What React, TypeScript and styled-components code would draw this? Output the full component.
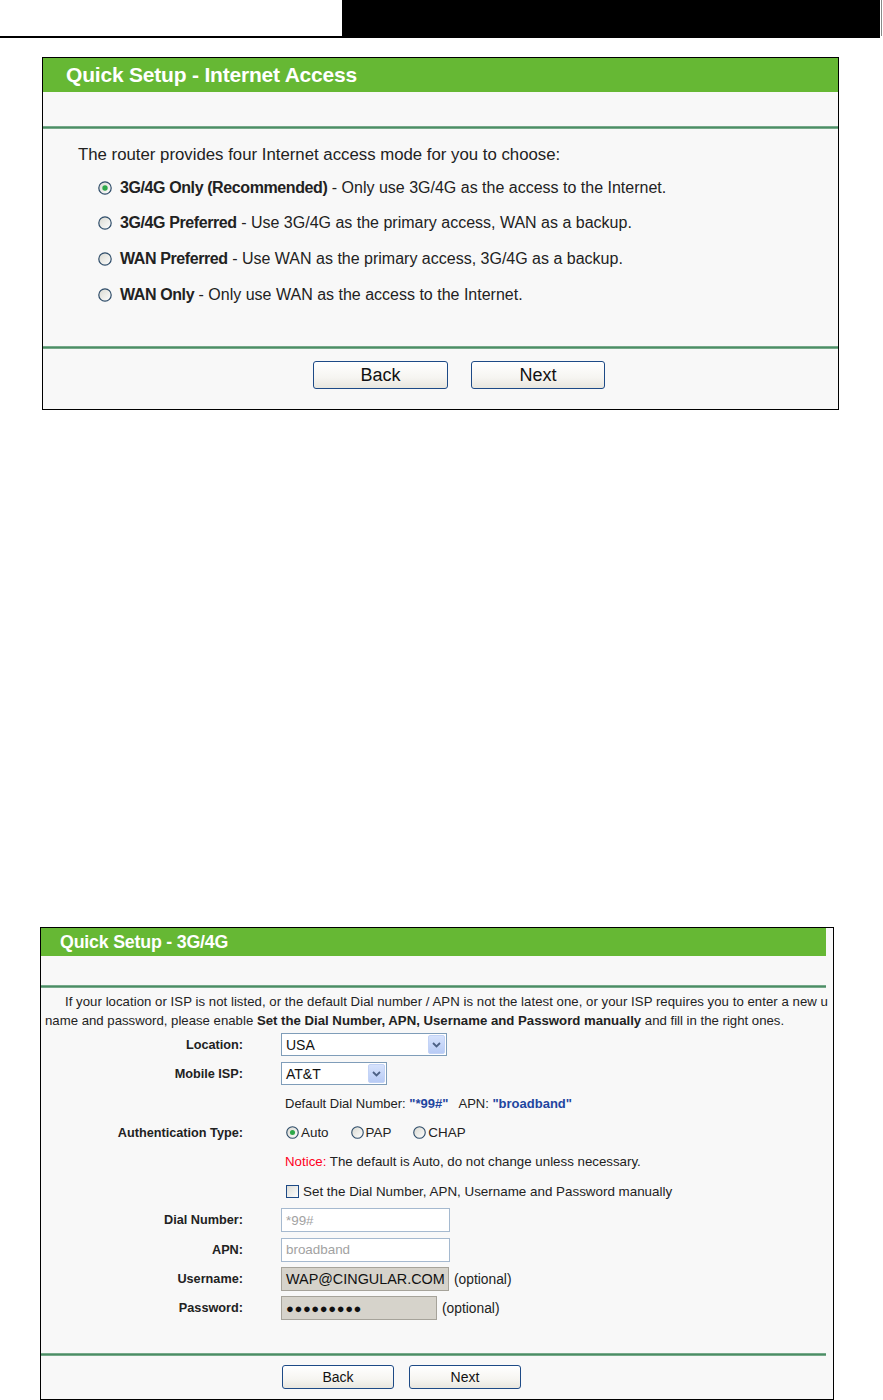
import styled, { createGlobalStyle } from "styled-components";

const GlobalStyle = createGlobalStyle`
  html, body {
    margin: 0;
    padding: 0;
    background: #fff;
  }
  body {
    font-family: "Liberation Sans", Arial, sans-serif;
    color: #222;
  }
`;

const Header = styled.div`
  display: flex;
  height: 38px;
`;

const HeaderLeft = styled.div`
  width: 342px;
  box-sizing: border-box;
  border-bottom: 2px solid #000;
`;

const HeaderBar = styled.div`
  width: 538px;
  background: #000;
`;

const HeaderEdge = styled.div`
  width: 1px;
  height: 36px;
  margin-left: 1px;
  background: #8a8a8a;
`;

const Panel = styled.section<{ $left: number; $top: number; $width: number; $height: number; $padRight?: number }>`
  box-sizing: border-box;
  margin: ${(p) => p.$top}px 0 0 ${(p) => p.$left}px;
  width: ${(p) => p.$width}px;
  height: ${(p) => p.$height}px;
  border: 1px solid #000;
  background: #f8f8f8;
  padding-right: ${(p) => p.$padRight ?? 0}px;
  display: flex;
  flex-direction: column;
  overflow: hidden;
`;

const TitleBar = styled.div<{ $size: number; $height: number; $indent: number }>`
  height: ${(p) => p.$height}px;
  line-height: ${(p) => p.$height}px;
  background: #66b834;
  color: #fff;
  font-weight: bold;
  font-size: ${(p) => p.$size}px;
  padding-left: ${(p) => p.$indent}px;
  letter-spacing: -0.2px;
`;

const Spacer = styled.div<{ $h: number }>`
  height: ${(p) => p.$h}px;
  flex-shrink: 0;
`;

const Rule = styled.div`
  height: 3px;
  flex-shrink: 0;
  background: linear-gradient(#9cc4ab, #4c8d65 35%, #4c8d65 65%, #9cc4ab);
`;

/* ---------- first panel ---------- */

const Intro = styled.p`
  margin: 16px 0 5px 35px;
  font-size: 16.8px;
  line-height: 20px;
`;

const ModeList = styled.div`
  display: flex;
  flex-direction: column;
  padding-left: 55px;
`;

const ModeRow = styled.label`
  display: flex;
  align-items: center;
  gap: 8px;
  height: 35.6px;
  font-size: 16px;
`;

const ModeName = styled.b`
  font-weight: bold;
  letter-spacing: -0.4px;
`;

const Strong = styled.b`
  font-weight: bold;
`;

const ButtonRow = styled.div<{ $gap: number; $top: number; $indent: number }>`
  display: flex;
  gap: ${(p) => p.$gap}px;
  margin-top: ${(p) => p.$top}px;
  padding-left: ${(p) => p.$indent}px;
`;

const Button = styled.button<{ $w: number; $h: number; $size: number }>`
  box-sizing: border-box;
  width: ${(p) => p.$w}px;
  height: ${(p) => p.$h}px;
  border: 1px solid #1d4a86;
  border-radius: 3px;
  background: linear-gradient(#ffffff, #f6f5f1 60%, #e8e6de);
  font-family: "Liberation Sans", Arial, sans-serif;
  font-size: ${(p) => p.$size}px;
  color: #111;
  padding: 0;
`;

/* ---------- second panel ---------- */

const Para = styled.div`
  margin-top: 4px;
  padding-left: 4px;
  font-size: 13.2px;
  line-height: 19px;
`;

const ParaFirst = styled.div`
  white-space: nowrap;
  padding-left: 20px;
  letter-spacing: 0.04px;
`;

const FormGrid = styled.div`
  display: grid;
  grid-template-columns: 202px 1fr;
  column-gap: 38px;
  grid-auto-rows: 29.3px;
  align-items: center;
`;

const Label = styled.div`
  text-align: right;
  font-weight: bold;
  font-size: 12.7px;
`;

const Cell = styled.div<{ $indent?: number }>`
  display: flex;
  align-items: center;
  font-size: 13.4px;
  padding-left: ${(p) => p.$indent ?? 0}px;
`;

const Note = styled.span<{ $size?: number }>`
  padding-left: 4px;
  font-size: ${(p) => p.$size ?? 13.3}px;
`;

const Value = styled.span`
  color: #1f46a0;
  font-weight: bold;
`;

const Red = styled.span`
  color: #ff0022;
`;

const Choice = styled.span`
  display: inline-flex;
  align-items: center;
  gap: 2px;
  margin-right: 17px;
  margin-left: 5px;
`;

const SelectBox = styled.div<{ $w: number }>`
  box-sizing: border-box;
  width: ${(p) => p.$w}px;
  height: 23px;
  border: 1px solid #7f9db9;
  background: #fff;
  display: flex;
  align-items: center;
  justify-content: space-between;
  padding: 0 1px 0 4px;
  font-size: 14px;
  color: #111;
`;

const SelectArrow = styled.span`
  width: 17px;
  height: 19px;
  border-radius: 2px;
  background: linear-gradient(#d6e2fc, #b8cbf5);
  border: 1px solid #c3d3f6;
  box-sizing: border-box;
  display: flex;
  align-items: center;
  justify-content: center;
`;

const TextBox = styled.div<{ $w: number; $disabled?: boolean }>`
  box-sizing: border-box;
  width: ${(p) => p.$w}px;
  height: 24px;
  border: 1px solid ${(p) => (p.$disabled ? "#a6a39a" : "#a5b9cf")};
  background: ${(p) => (p.$disabled ? "#d6d3cb" : "#fff")};
  color: ${(p) => (p.$disabled ? "#111" : "#a2a2a2")};
  font-size: ${(p) => (p.$disabled ? 14.4 : 13.4)}px;
  display: flex;
  align-items: center;
  padding-left: 4px;
`;

const Dots = styled.span`
  font-size: 13px;
  letter-spacing: 0.6px;
  font-weight: bold;
`;

const Optional = styled.span`
  font-size: 13.8px;
  margin-left: 5px;
`;

function Radio({ checked = false, size = 14 }: { checked?: boolean; size?: number }) {
  return (
    <svg width={size} height={size} viewBox="0 0 14 14" style={{ flexShrink: 0 }}>
      <defs>
        <linearGradient id="rg" x1="0" y1="0" x2="1" y2="1">
          <stop offset="0" stopColor="#d8d8d0" />
          <stop offset="1" stopColor="#ffffff" />
        </linearGradient>
      </defs>
      <circle cx="7" cy="7" r="6.2" fill="url(#rg)" stroke="#2f4d6a" strokeWidth="1.2" />
      {checked && <circle cx="7" cy="7" r="2.7" fill="#2ea84a" />}
    </svg>
  );
}

function Check() {
  return (
    <svg width="13" height="13" viewBox="0 0 13 13" style={{ flexShrink: 0, marginRight: 4 }}>
      <defs>
        <linearGradient id="cg" x1="0" y1="0" x2="1" y2="1">
          <stop offset="0" stopColor="#dcdcd6" />
          <stop offset="1" stopColor="#ffffff" />
        </linearGradient>
      </defs>
      <rect x="0.5" y="0.5" width="12" height="12" fill="url(#cg)" stroke="#1d4a86" />
    </svg>
  );
}

function Chevron() {
  return (
    <svg width="9" height="6" viewBox="0 0 9 6">
      <path d="M1 1 L4.5 4.5 L8 1" fill="none" stroke="#4d6185" strokeWidth="1.8" />
    </svg>
  );
}

const modes = [
  { name: "3G/4G Only (Recommended)", text: "Only use 3G/4G as the access to the Internet.", checked: true },
  { name: "3G/4G Preferred", text: "Use 3G/4G as the primary access, WAN as a backup." },
  { name: "WAN Preferred", text: "Use WAN as the primary access, 3G/4G as a backup." },
  { name: "WAN Only", text: "Only use WAN as the access to the Internet." },
];

export default function App() {
  return (
    <>
      <GlobalStyle />
      <Header>
        <HeaderLeft />
        <HeaderBar />
        <HeaderEdge />
      </Header>

      <Panel $left={42} $top={19} $width={797} $height={353}>
        <TitleBar $size={21} $height={34} $indent={23}>
          Quick Setup - Internet Access
        </TitleBar>
        <Spacer $h={34} />
        <Rule />
        <Intro>The router provides four Internet access mode for you to choose:</Intro>
        <ModeList>
          {modes.map((m) => (
            <ModeRow key={m.name}>
              <Radio checked={m.checked} />
              <span>
                <ModeName>{m.name}</ModeName> - {m.text}
              </span>
            </ModeRow>
          ))}
        </ModeList>
        <Spacer $h={34} />
        <Rule />
        <ButtonRow $gap={23} $top={12} $indent={270}>
          <Button $w={135} $h={28} $size={18}>Back</Button>
          <Button $w={134} $h={28} $size={18}>Next</Button>
        </ButtonRow>
      </Panel>

      <Panel $left={40} $top={517} $width={794} $height={473} $padRight={7}>
        <TitleBar $size={17.8} $height={28} $indent={19}>
          Quick Setup - 3G/4G
        </TitleBar>
        <Spacer $h={29} />
        <Rule />
        <Para>
          <ParaFirst>
            If your location or ISP is not listed, or the default Dial number / APN is not the latest one, or
            your ISP requires you to enter a new u
          </ParaFirst>
          <div>
            name and password, please enable <Strong>Set the Dial Number, APN, Username and Password manually</Strong>{" "}
            and fill in the right ones.
          </div>
        </Para>
        <FormGrid>
          <Label>Location:</Label>
          <Cell>
            <SelectBox $w={166}>
              USA
              <SelectArrow>
                <Chevron />
              </SelectArrow>
            </SelectBox>
          </Cell>

          <Label>Mobile ISP:</Label>
          <Cell>
            <SelectBox $w={106}>
              AT&amp;T
              <SelectArrow>
                <Chevron />
              </SelectArrow>
            </SelectBox>
          </Cell>

          <div />
          <Cell>
            <Note $size={13}>
              Default Dial Number: <Value>"*99#"</Value>&nbsp;&nbsp; APN: <Value>"broadband"</Value>
            </Note>
          </Cell>

          <Label>Authentication Type:</Label>
          <Cell>
            <Choice>
              <Radio checked size={13} />
              Auto
            </Choice>
            <Choice>
              <Radio size={13} />
              PAP
            </Choice>
            <Choice>
              <Radio size={13} />
              CHAP
            </Choice>
          </Cell>

          <div />
          <Cell>
            <Note>
              <Red>Notice:</Red> The default is Auto, do not change unless necessary.
            </Note>
          </Cell>

          <div />
          <Cell $indent={5}>
            <Check />
            Set the Dial Number, APN, Username and Password manually
          </Cell>

          <Label>Dial Number:</Label>
          <Cell>
            <TextBox $w={169}>*99#</TextBox>
          </Cell>

          <Label>APN:</Label>
          <Cell>
            <TextBox $w={169}>broadband</TextBox>
          </Cell>

          <Label>Username:</Label>
          <Cell>
            <TextBox $w={168} $disabled>
              WAP@CINGULAR.COM
            </TextBox>
            <Optional>(optional)</Optional>
          </Cell>

          <Label>Password:</Label>
          <Cell>
            <TextBox $w={156} $disabled>
              <Dots>●●●●●●●●●</Dots>
            </TextBox>
            <Optional>(optional)</Optional>
          </Cell>
        </FormGrid>
        <Spacer $h={30} />
        <Rule />
        <ButtonRow $gap={15} $top={9} $indent={241}>
          <Button $w={112} $h={24} $size={14}>Back</Button>
          <Button $w={112} $h={24} $size={14}>Next</Button>
        </ButtonRow>
      </Panel>
    </>
  );
}
